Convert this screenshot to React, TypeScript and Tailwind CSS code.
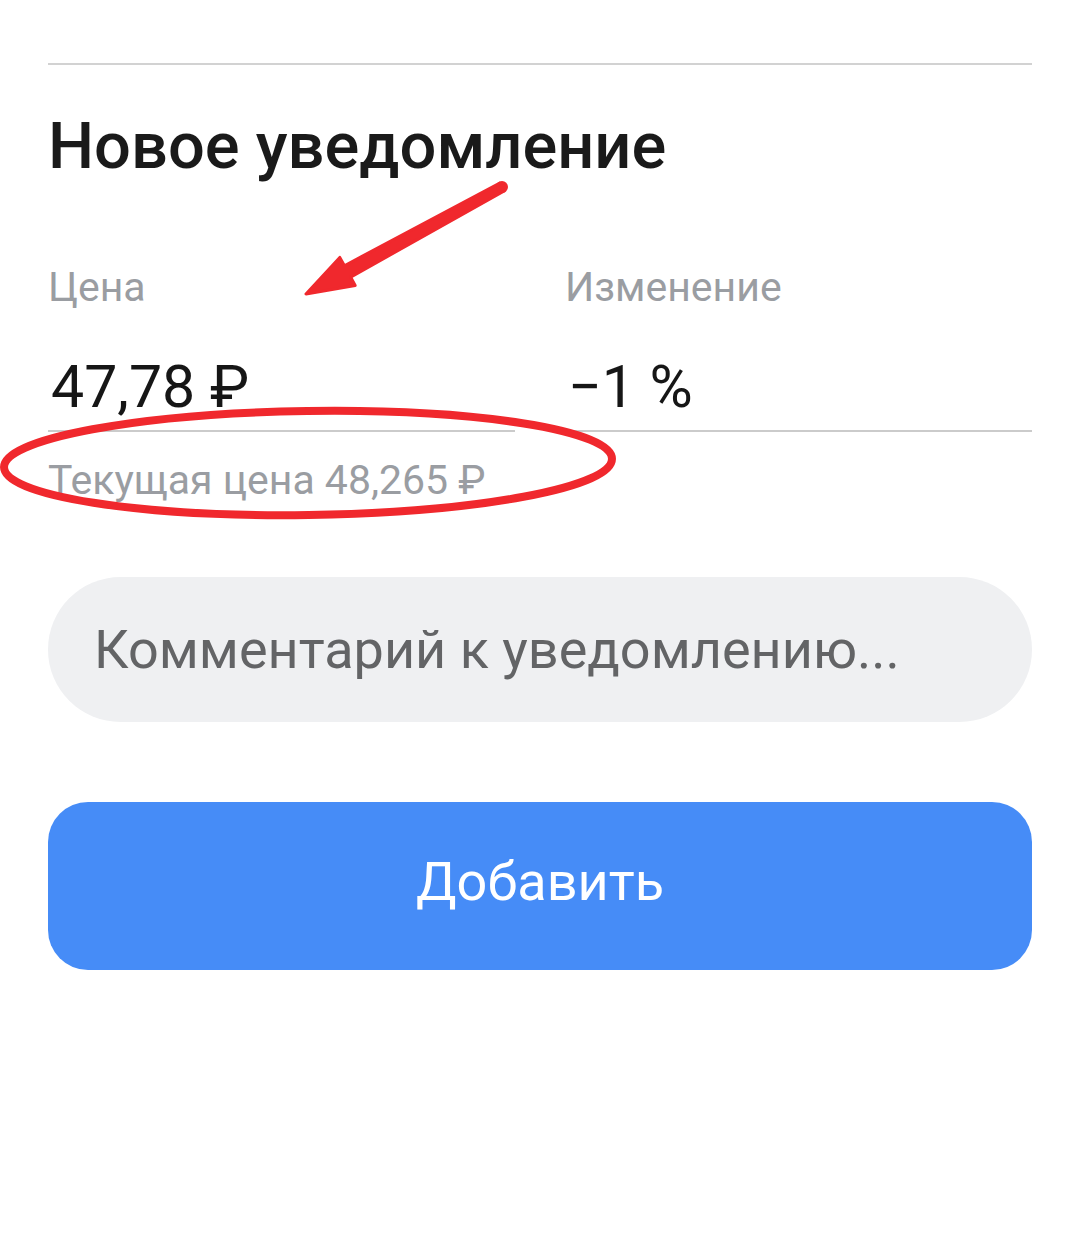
import React from "react";

export default function App() {
  return (
    <div
      className="relative w-[1080px] h-[1238px] bg-white overflow-hidden"
      style={{ fontFamily: "Roboto, 'Noto Sans', sans-serif" }}
    >
      <div className="px-12 pt-[63px]">
        <div className="h-[2px] bg-[#d2d2d2]" />
        <h1 className="mt-[43px] text-[65px] leading-[76px] font-medium text-[#1a1a1a]">
          Новое уведомление
        </h1>

        <div className="mt-[79px] grid grid-cols-2 gap-x-[50px]">
          <div className="flex flex-col">
            <div className="text-[41px] leading-[48px] text-[#9a9da2]">Цена</div>
            <div className="mt-[41px] pb-[8px] border-b-2 border-[#cbcbcb] pl-[3px] text-[59px] leading-[70px] text-[#161616]">
              47,78 ₽
            </div>
            <div className="mt-[25px] text-[41px] leading-[46px] text-[#9a9da2]">
              Текущая цена 48,265 ₽
            </div>
          </div>
          <div className="flex flex-col">
            <div className="text-[41px] leading-[48px] text-[#9a9da2]">Изменение</div>
            <div className="mt-[41px] pb-[8px] border-b-2 border-[#cbcbcb] pl-[3px] text-[59px] leading-[70px] text-[#161616]">
              −1 %
            </div>
          </div>
        </div>

        <div className="mt-[74px] h-[145px] rounded-full bg-[#eff0f2] flex items-center pl-[46px]">
          <span className="text-[54px] leading-[64px] text-[#636466]">
            Комментарий к уведомлению...
          </span>
        </div>

        <button className="mt-[80px] w-full h-[168px] rounded-[40px] bg-[#468cf7] flex items-center justify-center pb-2">
          <span className="text-[54px] leading-[64px] text-white">Добавить</span>
        </button>
      </div>

      <svg
        className="absolute left-0 top-0 pointer-events-none"
        width="1080"
        height="1238"
        viewBox="0 0 1080 1238"
      >
        <g fill="#f0282d" stroke="#f0282d" strokeWidth="3" strokeLinejoin="round">
          <polygon points="499.8,183 344.4,265.7 339.8,257.4 306,294 355.2,285.4 350.6,277.1 504.2,191" />
          <circle cx="502" cy="187" r="4.5" />
        </g>
        <ellipse
          cx="308"
          cy="463"
          rx="304"
          ry="52"
          fill="none"
          stroke="#f0282d"
          strokeWidth="8"
          transform="rotate(-0.8 308 463)"
        />
      </svg>
    </div>
  );
}
